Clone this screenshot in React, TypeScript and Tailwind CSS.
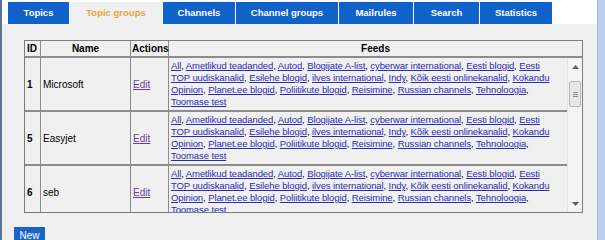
import React from 'react';

type Feed = { t: string; c: boolean };

const feedLines: Feed[][] = [
  [
    { t: 'All', c: true },
    { t: 'Ametlikud teadanded', c: true },
    { t: 'Autod', c: true },
    { t: 'Blogijate A-list', c: true },
    { t: 'cyberwar international', c: true },
    { t: 'Eesti blogid', c: true },
    { t: 'Eesti', c: false },
  ],
  [
    { t: 'TOP uudiskanalid', c: true },
    { t: 'Esilehe blogid', c: true },
    { t: 'ilves international', c: true },
    { t: 'Indy', c: true },
    { t: 'Kõik eesti onlinekanalid', c: true },
    { t: 'Kokandu', c: false },
  ],
  [
    { t: 'Opinion', c: true },
    { t: 'Planet.ee blogid', c: true },
    { t: 'Poliitikute blogid', c: true },
    { t: 'Reisimine', c: true },
    { t: 'Russian channels', c: true },
    { t: 'Tehnoloogia', c: true },
  ],
  [{ t: 'Toomase test', c: false }],
];

const tabs = [
  { label: 'Topics', w: 'w-[61px]' },
  { label: 'Topic groups', w: 'w-[92px]', active: true },
  { label: 'Channels', w: 'w-[72px]' },
  { label: 'Channel groups', w: 'w-[102px]' },
  { label: 'Mailrules', w: 'w-[74px]' },
  { label: 'Search', w: 'w-[65px]' },
  { label: 'Statistics', w: 'w-[72px]' },
];

const groups = [
  { id: 1, name: 'Microsoft' },
  { id: 5, name: 'Easyjet' },
  { id: 6, name: 'seb' },
];

const Feeds = () => (
  <div className="leading-[12px] text-[9.5px] tracking-[-0.1px]">
    {feedLines.map((line, i) => (
      <div key={i} className="whitespace-nowrap">
        {line.map((f, j) => (
          <React.Fragment key={j}>
            <a href="#" className="text-[#2b2bb0] underline">
              {f.t}
            </a>
            {f.c ? ', ' : ''}
          </React.Fragment>
        ))}
      </div>
    ))}
  </div>
);

const Scrollbar = () => (
  <div className="w-[15px] flex flex-col bg-[#f4f4f4] border-l border-[#e2e2e2]">
    <div className="h-[17px] flex items-center justify-center">
      <svg width="7" height="4" viewBox="0 0 7 4">
        <path d="M0 4 L3.5 0 L7 4 Z" fill="#606060" />
      </svg>
    </div>
    <div className="mt-[6px] mx-[1px] h-[26px] bg-[#e8e8e8] border border-[#b5b5b5] rounded-[2px] flex items-center justify-center">
      <div className="flex flex-col gap-[1px]">
        <div className="w-[5px] h-[1px] bg-[#8a8a8a]" />
        <div className="w-[5px] h-[1px] bg-[#8a8a8a]" />
        <div className="w-[5px] h-[1px] bg-[#8a8a8a]" />
      </div>
    </div>
    <div className="flex-1" />
    <div className="h-[17px] flex items-center justify-center">
      <svg width="7" height="4" viewBox="0 0 7 4">
        <path d="M0 0 L3.5 4 L7 0 Z" fill="#606060" />
      </svg>
    </div>
  </div>
);

const App = () => {
  return (
    <div
      className="flex w-[605px] h-[240px] overflow-hidden text-[10px] text-black"
      style={{ fontFamily: '"Liberation Sans", Arial, sans-serif' }}
    >
      <div className="w-[2px] bg-[#5d7594]" />
      <div className="flex-1 flex flex-col min-w-0">
        <div className="h-[24px] bg-white pt-[2px] pl-[6px] flex gap-[1px]">
          {tabs.map((tab) => (
            <div
              key={tab.label}
              className={`${tab.w} h-[22px] flex items-center justify-center font-bold text-[9.5px] ${
                tab.active ? 'bg-[#f0f0f0] text-[#eea53a]' : 'bg-[#0f62c9] text-white'
              }`}
            >
              {tab.label}
            </div>
          ))}
        </div>

        <div className="flex-1 bg-[#f0f0f0] pl-[22px] pt-[16px] flex flex-col">
          <div className="w-[559px] h-[173px] border border-[#7c7c7c] flex flex-col bg-[#f0f0f0]">
            <div className="grid grid-cols-[16px_90px_38px_1fr] h-[17px] font-bold border-b-2 border-[#8c8c8c]">
              <div className="px-[2px] border-r border-[#8c8c8c] flex items-center">ID</div>
              <div className="border-r border-[#8c8c8c] flex items-center justify-center">Name</div>
              <div className="px-[1px] border-r border-[#8c8c8c] flex items-center">Actions</div>
              <div className="flex items-center justify-center">Feeds</div>
            </div>
            <div className="flex-1 flex min-h-0">
              <div className="flex-1 overflow-hidden">
                {groups.map((g) => (
                  <div
                    key={g.id}
                    className="grid grid-cols-[16px_90px_38px_1fr] border-b-2 border-[#8c8c8c]"
                  >
                    <div className="px-[2px] border-r border-[#8c8c8c] flex items-center font-bold">
                      {g.id}
                    </div>
                    <div className="px-[2px] border-r border-[#8c8c8c] flex items-center">
                      {g.name}
                    </div>
                    <div className="px-[2px] border-r border-[#8c8c8c] flex items-center">
                      <a href="#" className="text-[#6b3d9a] underline">
                        Edit
                      </a>
                    </div>
                    <div className="px-[2px] py-[2px] overflow-hidden">
                      <Feeds />
                    </div>
                  </div>
                ))}
              </div>
              <Scrollbar />
            </div>
          </div>
          <div className="mt-[14px] -ml-[10px]">
            <button className="w-[31px] h-[16px] bg-[#1a63c9] text-white text-[10px] flex items-center justify-center">
              New
            </button>
          </div>
        </div>
      </div>
      <div className="w-[8px] bg-[#b9d1ec] border-l border-[#9fb6d0]" />
    </div>
  );
};

export default App;
